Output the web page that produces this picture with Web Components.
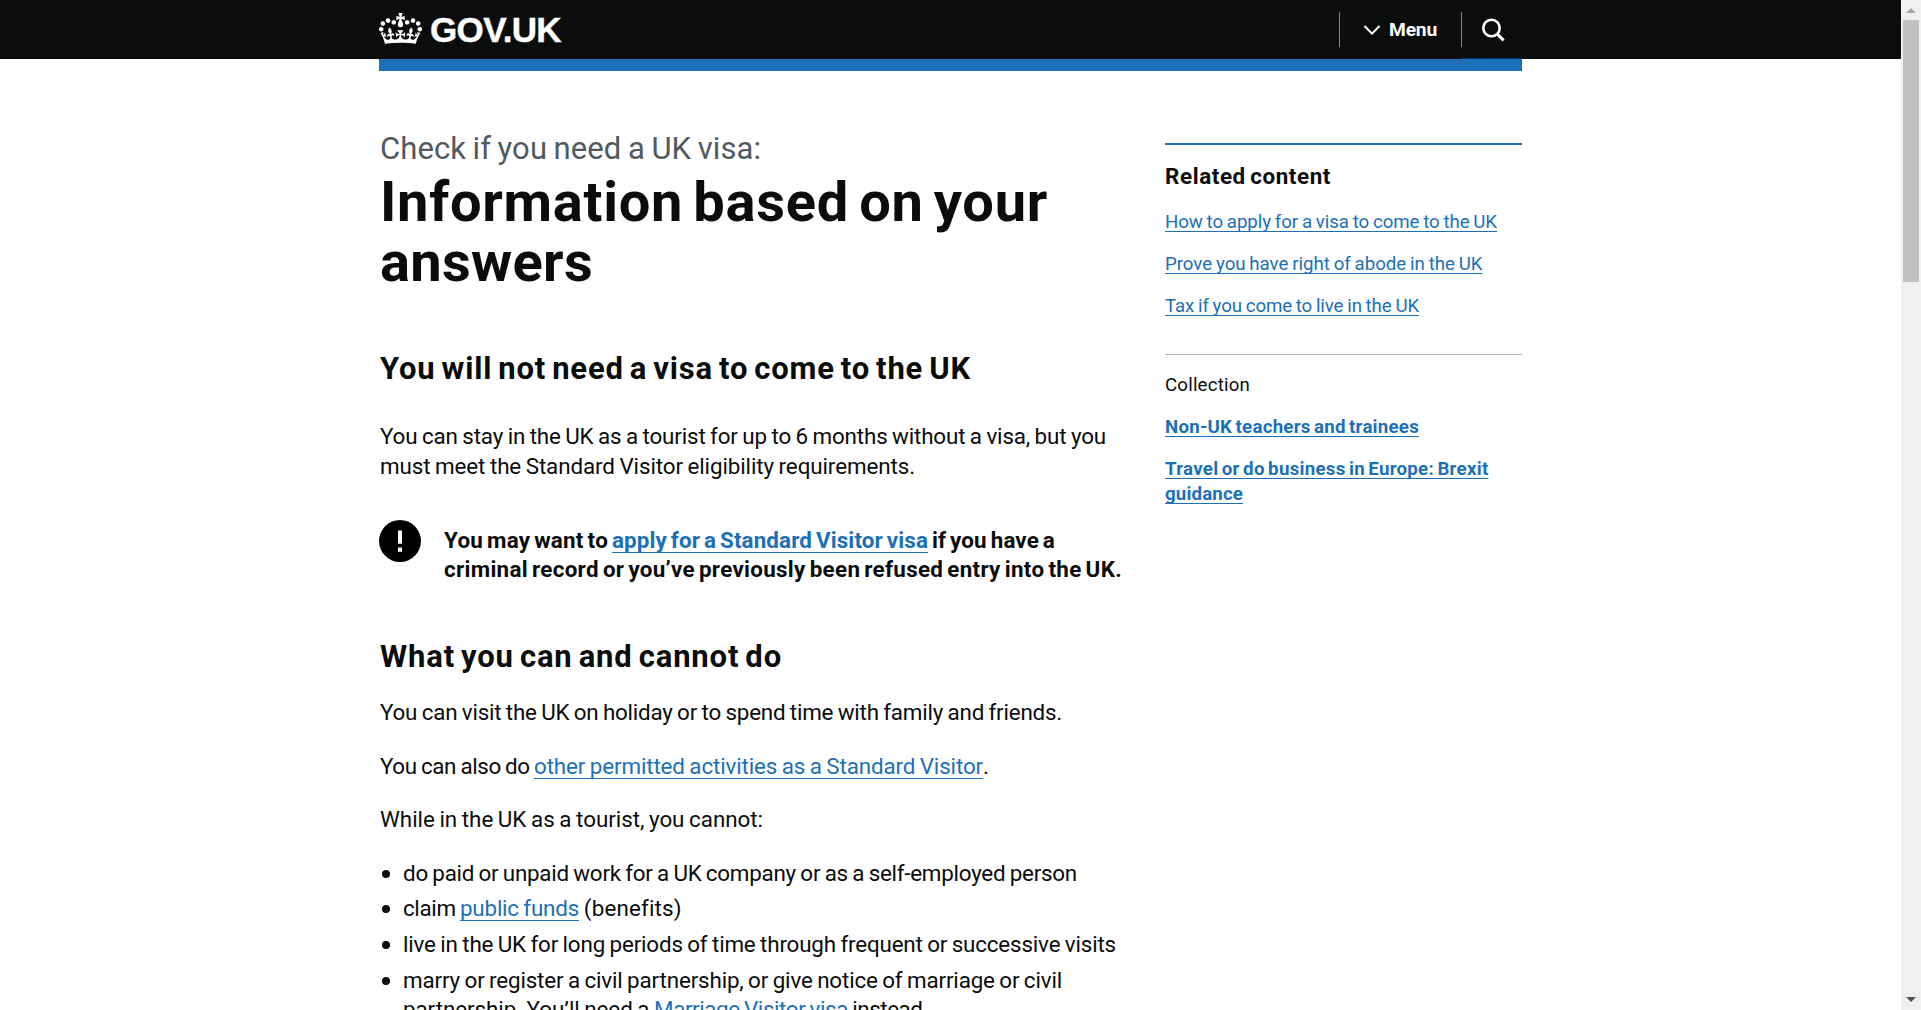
<!DOCTYPE html>
<html lang="en">
<head>
<meta charset="utf-8">
<title>Check if you need a UK visa - GOV.UK</title>
<style>
html, body { margin: 0; height: 100%; overflow: hidden; background: #fff; }
body { font-family: Roboto, "Liberation Sans", sans-serif; color: #0b0c0c; }
</style>
</head>
<body>
<visa-page></visa-page>
<script>
const define = (name, html, ready) => {
  const tpl = document.createElement('template');
  tpl.innerHTML = html;
  customElements.define(name, class extends HTMLElement {
    constructor() {
      super();
      this.attachShadow({ mode: 'open' }).append(tpl.content.cloneNode(true));
    }
    connectedCallback() { if (ready) ready(this); }
  });
};

/* A run of text tracked so that it advances exactly `w` pixels. */
define('text-run', `<style>
:host { display: inline-block; white-space: pre; vertical-align: baseline; }
:host([link]) { color: #1d70b8; }
:host([link]) span { text-decoration: underline 1px; text-underline-offset: var(--offset, 3.5px); text-decoration-skip-ink: none; cursor: pointer; }
</style><span><slot></slot></span>`, el => {
  const w = parseFloat(el.getAttribute('w'));
  el.style.letterSpacing = '0px';
  const natural = el.getBoundingClientRect().width;
  if (natural) el.style.letterSpacing = ((w - natural) / el.textContent.length).toFixed(4) + 'px';
  el.style.width = w + 'px';
});

define('text-line', `<style>
:host { display: block; font-size: 22.4px; line-height: 30px; height: 30px; white-space: nowrap; word-spacing: -0.04em; }
:host([size="s"]) { font-size: 18.7px; line-height: 25px; height: 25px; --offset: 2.5px; }
:host([size="w"]) { line-height: 29px; height: 29px; }
:host([size="l"]) { font-size: 31px; line-height: 40px; height: 40px; }
:host([size="xl"]) { font-size: 56px; line-height: 60px; height: 60px; }
:host([bold]) { font-weight: 700; word-spacing: -0.08em; }
:host([muted]) { color: #505a5f; }
</style><slot></slot>`);

define('list-item', `<style>
:host { display: flex; }
i { flex: none; width: 8px; height: 8px; border-radius: 50%; background: #0b0c0c; margin: 11px 13px 0 2px; }
</style><i></i><div><slot></slot></div>`);

define('warning-text', `<style>
:host { display: flex; gap: 23px; }
svg { flex: none; width: 42px; height: 42px; margin-left: -1px; }
div { padding-top: 6px; }
</style>
<svg viewBox="0 0 42 42"><circle cx="21" cy="21" r="21" fill="#000"/><path d="M19 10.5h4v13.200h-4zM19 27.500h4v4.300h-4z" fill="#fff"/></svg>
<div><slot></slot></div>`);

define('site-header', `<style>
:host { display: block; height: 71px; }
.bar { height: 59px; background: #0b0c0c; }
.in { width: 1143px; height: 59px; margin: 0 auto; display: flex; color: #fff; }
.crown { width: 43px; height: 31px; margin-top: 13px; fill: #fff; flex: none; }
.name { font: 700 35px/40px "Liberation Sans", Arial, sans-serif; margin: 10px 0 0 8px; -webkit-text-stroke: .4px #fff; }
.nav { margin-left: auto; display: flex; padding-top: 12px; height: 46px; }
.menu { border-left: 1px solid #858686; height: 35px; width: 121px; display: flex; }
.menu svg { width: 18px; height: 12px; margin: 12px 0 0 23px; }
.menu text-run { font: 700 19.2px/24px Roboto, sans-serif; margin: 6px 0 0 8px; }
.search { border-left: 1px solid #858686; height: 35px; width: 60px; }
.search svg { width: 24px; height: 24px; margin: 6px 0 0 19px; display: block; }
.blue { width: 1143px; height: 12px; margin: 0 auto; background: #1d70b8; display: flex; justify-content: flex-end; }
.blue i { width: 60px; height: 1px; margin-top: -1px; background: #003078; }
</style>
<div class="bar"><div class="in">
<svg class="crown" viewBox="0 0 132 97" preserveAspectRatio="none"><path d="M25 30.2c3.5 1.5 7.7-.2 9.1-3.7 1.5-3.6-.2-7.8-3.9-9.2-3.6-1.4-7.6.3-9.1 3.9-1.4 3.5.3 7.5 3.9 9zM9 39.5c3.6 1.5 7.8-.2 9.2-3.7 1.5-3.6-.2-7.8-3.9-9.1-3.6-1.5-7.6.2-9.1 3.8-1.4 3.5.3 7.5 3.8 9zM4.4 57.2c3.5 1.5 7.7-.2 9.1-3.8 1.5-3.6-.2-7.7-3.9-9.1-3.5-1.5-7.6.3-9.1 3.8-1.4 3.5.3 7.6 3.9 9.1zm38.3-21.4c3.5 1.5 7.7-.2 9.1-3.8 1.5-3.6-.2-7.7-3.9-9.1-3.6-1.5-7.6.3-9.1 3.8-1.3 3.6.4 7.7 3.9 9.1zm64.4-5.6c-3.6 1.5-7.8-.2-9.1-3.7-1.5-3.6.2-7.8 3.8-9.2 3.6-1.4 7.7.3 9.2 3.9 1.3 3.5-.4 7.5-3.9 9zm15.9 9.3c-3.6 1.5-7.7-.2-9.1-3.7-1.5-3.6.2-7.8 3.7-9.1 3.6-1.5 7.7.2 9.2 3.8 1.5 3.5-.3 7.5-3.8 9zm4.7 17.7c-3.6 1.5-7.8-.2-9.2-3.8-1.5-3.6.2-7.7 3.9-9.1 3.6-1.5 7.7.3 9.2 3.8 1.3 3.5-.4 7.6-3.9 9.1zM89.3 35.8c-3.6 1.5-7.8-.2-9.2-3.8-1.4-3.6.2-7.7 3.9-9.1 3.6-1.5 7.7.3 9.2 3.8 1.4 3.6-.3 7.7-3.9 9.1zM69.7 17.7l8.9 4.7V9.3l-8.9 2.8c-.2-.3-.5-.6-.9-.9L72.4 0H59.6l3.5 11.2c-.3.3-.6.5-.9.9l-8.8-2.8v13.1l8.8-4.7c.3.3.6.7.9.9l-5 15.4v.1c-.2.8-.4 1.6-.4 2.4 0 4.1 3.1 7.5 7 8.1h.2c.3 0 .7.1 1 .1.4 0 .7 0 1-.1h.2c4-.6 7.1-4.1 7.1-8.1 0-.8-.1-1.7-.4-2.4V34l-5.1-15.4c.4-.2.7-.6 1-.9zM66 92.8c16.9 0 32.8 1.1 47.1 3.2 4-16.9 8.9-26.7 14-33.5l-9.6-3.4c1 4.9 1.1 7.2 0 10.2-1.5-1.4-3-4.3-4.2-8.7L108.6 76c2.8-2 5-3.2 7.5-3.3-4.4 9.4-10 11.9-13.6 11.2-4.3-.8-6.3-4.6-5.6-7.9 1-4.7 5.7-5.9 8-.5 4.3-8.7-3-11.4-7.6-8.8 7.1-7.2 7.9-13.5 2.1-21.1-8 6.1-8.1 12.3-4.5 20.8-4.7-5.4-12.1-2.5-9.5 6.2 3.4-5.2 7.9-2 7.2 3.1-.6 4.3-6.4 7.8-13.5 7.2-10.3-.9-10.9-8-11.2-13.8 2.5-.5 7.1 1.8 11 7.3L80.2 60c-4.1 4.4-8 5.3-12.3 5.4 1.4-4.4 8-11.6 8-11.6H55.5s6.4 7.2 7.9 11.6c-4.2-.1-8-1-12.3-5.4l1.4 16.4c3.9-5.5 8.5-7.7 10.9-7.3-.3 5.8-.9 12.8-11.1 13.8-7.2.6-12.9-2.9-13.5-7.2-.7-5 3.8-8.3 7.1-3.1 2.7-8.7-4.6-11.6-9.4-6.2 3.7-8.5 3.6-14.7-4.6-20.8-5.8 7.6-5 13.9 2.2 21.1-4.7-2.6-11.9.1-7.7 8.8 2.3-5.5 7.1-4.2 8.1.5.7 3.3-1.3 7.1-5.7 7.9-3.5.7-9-1.8-13.5-11.2 2.5.1 4.7 1.3 7.5 3.3l-4.7-15.4c-1.2 4.4-2.7 7.2-4.3 8.7-1.1-3-.9-5.3 0-10.2l-9.5 3.4c5 6.9 9.9 16.7 14 33.5 14.8-2.1 30.8-3.2 47.7-3.2z"/></svg>
<text-run class="name" w="131">GOV.UK</text-run>
<div class="nav">
<div class="menu"><svg viewBox="0 0 18 12" fill="none" stroke="#fff" stroke-width="2"><path d="M1.500 2l7.500 7.600L16.500 2"/></svg><text-run w="48">Menu</text-run></div>
<div class="search"><svg viewBox="0 0 24 24" fill="none" stroke="#fff" stroke-width="2.6"><circle cx="10.500" cy="10" r="8.200"/><path d="M15.800 15.700l6.800 6.600" stroke-width="3"/></svg></div>
</div></div></div>
<div class="blue"><i></i></div>`);

define('main-column', `<style>
:host { display: block; width: 744px; padding: 58px 0 0 1px; }
.h1 { margin-top: 3px; } .h2 { margin-top: 57px; } .p1 { margin-top: 32px; }
warning-text { margin-top: 39px; } .h2b { margin-top: 53px; } .p2 { margin-top: 20px; }
.p3 { margin-top: 24px; } .p4 { margin-top: 23px; }
.list { margin-top: 25px; display: flex; flex-direction: column; gap: 7px; }
.list list-item:nth-child(2) { margin-top: -1px; }
</style>
<text-line size="l" muted><text-run w="381">Check if you need a UK visa:</text-run></text-line>
<div class="h1">
<text-line size="xl" bold><text-run w="668">Information based on your</text-run></text-line>
<text-line size="xl" bold><text-run w="213">answers</text-run></text-line>
</div>
<text-line class="h2" size="l" bold><text-run w="591">You will not need a visa to come to the UK</text-run></text-line>
<div class="p1">
<text-line><text-run w="726">You can stay in the UK as a tourist for up to 6 months without a visa, but you</text-run></text-line>
<text-line><text-run w="535">must meet the Standard Visitor eligibility requirements.</text-run></text-line>
</div>
<warning-text>
<text-line size="w" bold><text-run w="168">You may want to </text-run><text-run link w="316">apply for a Standard Visitor visa</text-run><text-run w="127"> if you have a</text-run></text-line>
<text-line size="w" bold><text-run w="678">criminal record or you’ve previously been refused entry into the UK.</text-run></text-line>
</warning-text>
<text-line class="h2b" size="l" bold><text-run w="402">What you can and cannot do</text-run></text-line>
<text-line class="p2"><text-run w="682">You can visit the UK on holiday or to spend time with family and friends.</text-run></text-line>
<text-line class="p3"><text-run w="154">You can also do </text-run><text-run link w="449">other permitted activities as a Standard Visitor</text-run><text-run w="6">.</text-run></text-line>
<text-line class="p4"><text-run w="383">While in the UK as a tourist, you cannot:</text-run></text-line>
<div class="list">
<list-item><text-line size="w"><text-run w="674">do paid or unpaid work for a UK company or as a self-employed person</text-run></text-line></list-item>
<list-item><text-line size="w"><text-run w="57">claim </text-run><text-run link w="119">public funds</text-run><text-run w="102"> (benefits)</text-run></text-line></list-item>
<list-item><text-line size="w"><text-run w="713">live in the UK for long periods of time through frequent or successive visits</text-run></text-line></list-item>
<list-item><text-line size="w"><text-run w="659">marry or register a civil partnership, or give notice of marriage or civil</text-run></text-line>
<text-line size="w"><text-run w="251">partnership. You’ll need a </text-run><text-run link w="194">Marriage Visitor visa</text-run><text-run w="80"> instead.</text-run></text-line></list-item>
</div>`);

define('related-content', `<style>
:host { display: block; width: 357px; padding-top: 72px; }
.related { border-top: 2px solid #1d70b8; padding-top: 16px; height: 193px; }
.links, .more { display: flex; flex-direction: column; gap: 17px; }
.links { margin-top: 19px; }
.more { border-top: 1px solid #b1b4b6; padding-top: 18px; }
</style>
<div class="related">
<text-line bold><text-run w="166">Related content</text-run></text-line>
<div class="links">
<text-line size="s"><text-run link w="332">How to apply for a visa to come to the UK</text-run></text-line>
<text-line size="s"><text-run link w="317.5">Prove you have right of abode in the UK</text-run></text-line>
<text-line size="s"><text-run link w="254">Tax if you come to live in the UK</text-run></text-line>
</div></div>
<div class="more">
<text-line size="s"><text-run w="85">Collection</text-run></text-line>
<text-line size="s" bold><text-run link w="254">Non-UK teachers and trainees</text-run></text-line>
<div>
<text-line size="s" bold><text-run link w="323.5">Travel or do business in Europe: Brexit</text-run></text-line>
<text-line size="s" bold><text-run link w="78">guidance</text-run></text-line>
</div></div>`);

define('scroll-bar', `<style>
:host { display: flex; flex-direction: column; align-items: center; width: 20px; height: 100vh; background: #f0f0f0; }
svg { width: 10px; height: 5px; flex: none; }
.up { margin-top: 8px; fill: #a3a3a3; } .down { margin: auto 0 8px; fill: #505050; }
i { width: 16px; height: 262px; background: #c1c1c1; margin-top: 7px; flex: none; }
</style><svg class="up" viewBox="0 0 10 5"><path d="M0 5l5-5 5 5z"/></svg><i></i><svg class="down" viewBox="0 0 10 5"><path d="M0 0l5 5 5-5z"/></svg>`);

define('visa-page', `<style>
:host { display: flex; height: 100vh; overflow: hidden; }
.page { flex: 1; min-width: 0; }
.cols { display: flex; justify-content: space-between; width: 1143px; margin: 0 auto; }
</style>
<div class="page"><site-header></site-header><div class="cols"><main-column></main-column><related-content></related-content></div></div>
<scroll-bar></scroll-bar>`);
</script>
</body>
</html>
